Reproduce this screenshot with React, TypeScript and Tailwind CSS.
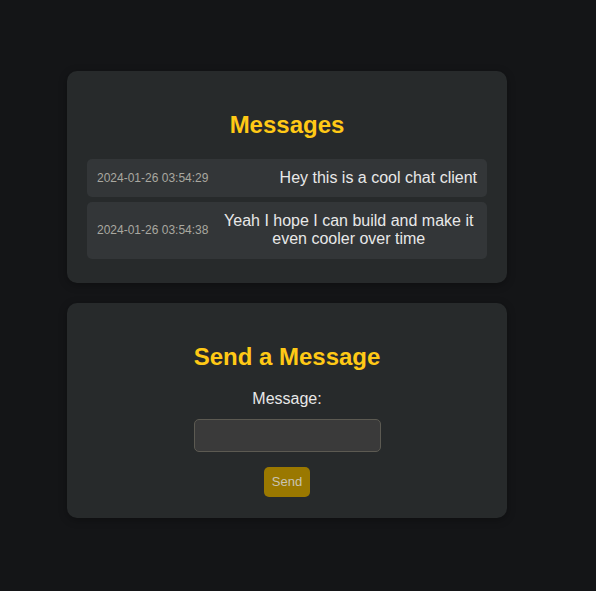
import { useState } from "react";

type Msg = { time: string; text: string };

const messages: Msg[] = [
    { time: "2024-01-26 03:54:29", text: "Hey this is a cool chat client" },
    { time: "2024-01-26 03:54:38", text: "Yeah I hope I can build and make it even cooler over time" },
];

const App = () => {
    const [message, setMessage] = useState("");

    return (
        <div
            className="min-h-[591px] bg-[#141517] pt-[71px] pl-[67px] flex flex-col items-start gap-5 text-[#e8e8e8]"
            style={{ fontFamily: '"Liberation Sans", Arial, sans-serif' }}
        >
            <div className="w-[440px] bg-[#272a2b] rounded-[10px] px-5 pt-5 pb-[19px] shadow-[0_2px_8px_rgba(0,0,0,0.3)]">
                <h2 className="text-2xl font-bold text-[#ffc916] text-center leading-[27.6px] my-5">
                    Messages
                </h2>
                <div className="flex flex-col">
                    {messages.map((m, i) => (
                        <div
                            key={i}
                            className="flex items-center justify-between gap-3 bg-[#333638] rounded-[5px] p-2.5 mb-[5px]"
                        >
                            <span className="text-xs text-[#a9a8a0] whitespace-nowrap">{m.time}</span>
                            <span className="text-base text-center leading-[18.4px]">{m.text}</span>
                        </div>
                    ))}
                </div>
            </div>

            <div className="w-[440px] bg-[#272a2b] rounded-[10px] px-5 pt-5 pb-[21px] shadow-[0_2px_8px_rgba(0,0,0,0.3)]">
                <h2 className="text-2xl font-bold text-[#ffc916] text-center leading-[27.6px] my-5">
                    Send a Message
                </h2>
                <form
                    className="flex flex-col items-center"
                    onSubmit={(e) => {
                        e.preventDefault();
                        setMessage("");
                    }}
                >
                    <label className="text-base leading-[18.4px]">Message:</label>
                    <input
                        type="text"
                        value={message}
                        onChange={(e) => setMessage(e.target.value)}
                        className="mt-[10px] w-[187px] h-[33px] bg-[#3a3a3a] border border-[#5c5a52] rounded-[5px] px-2 text-[#e8e8e8] outline-none"
                    />
                    <button
                        type="submit"
                        className="mt-[15px] bg-[#9a7800] text-[#c8c4b4] text-[13px] rounded-[5px] px-2 h-[30px] cursor-pointer"
                    >
                        Send
                    </button>
                </form>
            </div>
        </div>
    );
};

export default App;
